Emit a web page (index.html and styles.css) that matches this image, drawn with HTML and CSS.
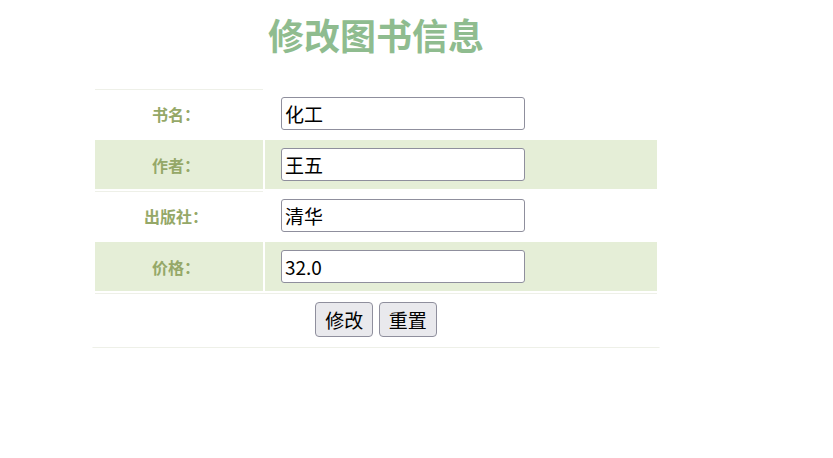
FILE: index.html
```html
<!DOCTYPE html>
<html lang="zh">
<head>
<meta charset="utf-8">
<title>修改图书信息</title>
<link rel="stylesheet" href="styles.css">
</head>
<body>
<div class="page">
  <h1 class="title">修改图书信息</h1>
  <form class="form">
    <table class="book-table">
      <tr class="row">
        <td class="label">书名：</td>
        <td class="value"><input class="field" type="text" value="化工"></td>
      </tr>
      <tr class="row alt">
        <td class="label">作者：</td>
        <td class="value"><input class="field" type="text" value="王五"></td>
      </tr>
      <tr class="row">
        <td class="label">出版社：</td>
        <td class="value"><input class="field" type="text" value="清华"></td>
      </tr>
      <tr class="row alt">
        <td class="label">价格：</td>
        <td class="value"><input class="field" type="text" value="32.0"></td>
      </tr>
      <tr class="row actions-row">
        <td class="actions" colspan="2"><button class="btn" type="button">修改</button> <button class="btn" type="reset">重置</button></td>
      </tr>
    </table>
  </form>
</div>
</body>
</html>
```

FILE: styles.css
```css
html, body {
  background: #ffffff;
}
body {
  margin: 8px;
  font-family: "Noto Sans CJK SC", "Noto Sans", sans-serif;
}
.page {
  width: 568px;
  margin-left: 84px;
}
.title {
  margin: 0 0 26px 0;
  font-size: 36px;
  line-height: 52px;
  font-weight: bold;
  text-align: center;
  color: #8fbc8f;
}
.form {
  margin: 0;
}
.book-table {
  width: 568px;
  border-collapse: separate;
  border-spacing: 2px;
  border: 1px solid transparent;
  border-bottom: 1px solid #eef0e8;
}
.row td {
  padding: 0;
}
.label {
  width: 162px;
  padding-right: 6px !important;
  height: 48px;
  border-top: 1px solid #eef0e8;
  text-align: center;
  vertical-align: middle;
  font-size: 16px;
  font-weight: bold;
  color: #95a868;
}
.value {
  padding-left: 16px !important;
  vertical-align: middle;
}
.alt td {
  background: #e5eed7;
}
.alt .label {
  border-top-color: #e5eed7;
}
.field {
  box-sizing: border-box;
  width: 244px;
  height: 33px;
  margin: 0;
  padding: 0 3px;
  border: 1px solid #8f8f9d;
  border-radius: 3px;
  background: #ffffff;
  font-family: "Noto Sans CJK SC", "Noto Sans", sans-serif;
  font-size: 19px;
  color: #000000;
  vertical-align: middle;
}
.actions {
  height: 51px;
  border-top: 1px solid #eef0e8;
  text-align: center;
  vertical-align: middle;
}
.btn {
  box-sizing: border-box;
  height: 35px;
  width: 58px;
  margin: 0 1px;
  padding: 0;
  border: 1px solid #8f8f9d;
  border-radius: 4px;
  background: #e9e9ed;
  font-family: "Noto Sans CJK SC", "Noto Sans", sans-serif;
  font-size: 19px;
  color: #000000;
  vertical-align: middle;
}
```
